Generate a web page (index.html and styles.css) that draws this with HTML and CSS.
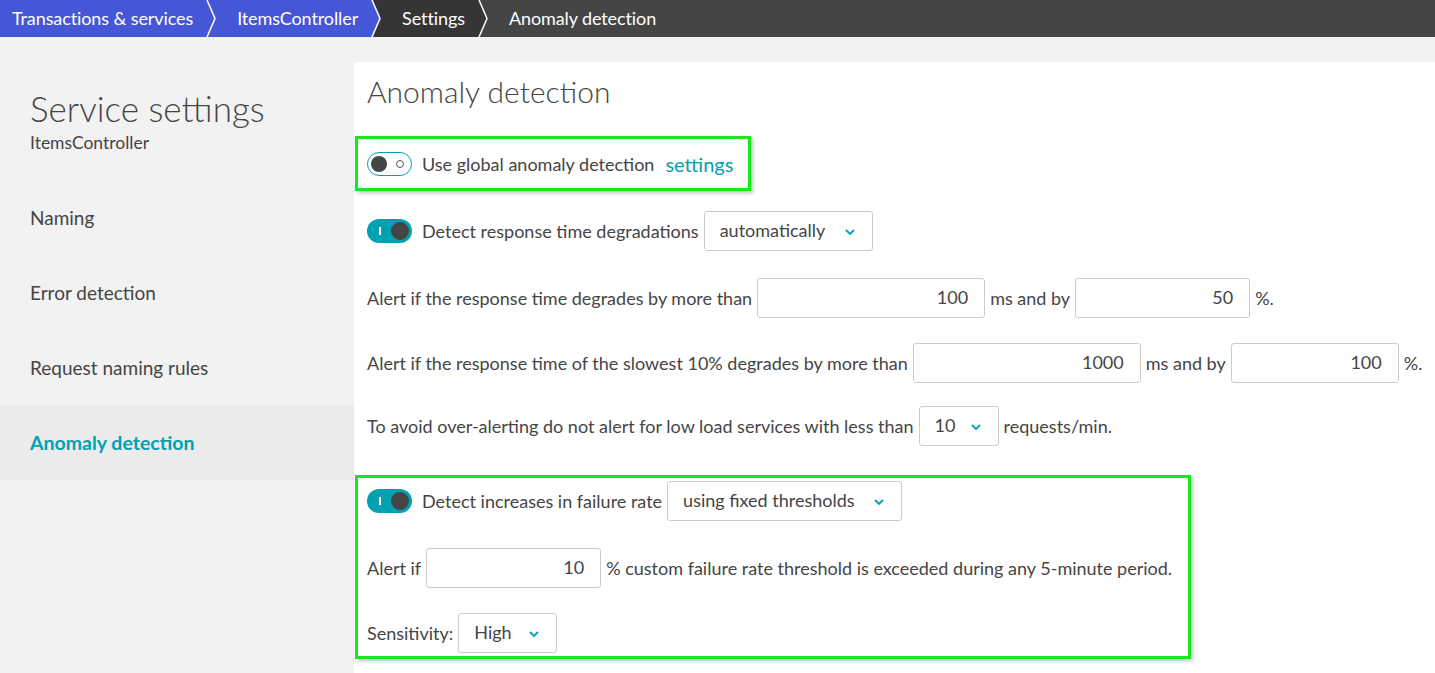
FILE: index.html
```html
<!DOCTYPE html>
<html lang="en">
<head>
<meta charset="utf-8">
<title>Anomaly detection</title>
<link rel="stylesheet" href="styles.css">
</head>
<body>
<header class="crumbs">
  <span class="crumb blue first">Transactions &amp; services</span>
  <svg class="sep" width="14" height="37" viewBox="0 0 14 37"><rect x="0" y="0" width="14" height="37" fill="#4556d6"/><polyline points="2,0 10,18.5 2,37" fill="none" stroke="#fff" stroke-width="1.5"/></svg>
  <span class="crumb blue">ItemsController</span>
  <svg class="sep" width="14" height="37" viewBox="0 0 14 37"><rect x="0" y="0" width="14" height="37" fill="#353535"/><polygon points="0,0 2,0 10,18.5 2,37 0,37" fill="#4556d6"/><polyline points="2,0 10,18.5 2,37" fill="none" stroke="#fff" stroke-width="1.5"/></svg>
  <span class="crumb dark">Settings</span>
  <svg class="sep" width="14" height="37" viewBox="0 0 14 37"><rect x="0" y="0" width="14" height="37" fill="#454545"/><polygon points="0,0 2,0 10,18.5 2,37 0,37" fill="#353535"/><polyline points="2,0 10,18.5 2,37" fill="none" stroke="#fff" stroke-width="1.5"/></svg>
  <span class="crumb grey">Anomaly detection</span>
</header>
<div class="main">
  <aside class="sidebar">
    <h1 class="side-title">Service settings</h1>
    <div class="side-sub">ItemsController</div>
    <nav class="nav">
      <a class="nav-item">Naming</a>
      <a class="nav-item">Error detection</a>
      <a class="nav-item">Request naming rules</a>
      <a class="nav-item active">Anomaly detection</a>
    </nav>
  </aside>
  <section class="panel">
    <h2 class="panel-title">Anomaly detection</h2>

    <div class="hl hl-one">
      <div class="row">
        <span class="toggle off"><span class="knob"></span><span class="ring"></span></span>
        <span class="label">Use global anomaly detection</span>
        <a class="link">settings</a>
      </div>
    </div>

    <div class="row r2">
      <span class="toggle on"><span class="bar"></span><span class="knob"></span></span>
      <span class="label">Detect response time degradations</span>
      <span class="select w-auto">automatically<svg class="chev" width="12" height="8" viewBox="0 0 12 8"><polyline points="2,2 6,6 10,2" fill="none" stroke="#00a1b2" stroke-width="1.8"/></svg></span>
    </div>

    <div class="row r3">
      <span>Alert if the response time degrades by more than</span>
      <span class="input w-a">100</span>
      <span>ms and by</span>
      <span class="input w-b">50</span>
      <span>%.</span>
    </div>

    <div class="row r4">
      <span>Alert if the response time of the slowest 10% degrades by more than</span>
      <span class="input w-a">1000</span>
      <span>ms and by</span>
      <span class="input w-c">100</span>
      <span>%.</span>
    </div>

    <div class="row r5">
      <span>To avoid over-alerting do not alert for low load services with less than</span>
      <span class="select w-10">10<svg class="chev" width="12" height="8" viewBox="0 0 12 8"><polyline points="2,2 6,6 10,2" fill="none" stroke="#00a1b2" stroke-width="1.8"/></svg></span>
      <span>requests/min.</span>
    </div>

    <div class="hl hl-two">
      <div class="row">
        <span class="toggle on"><span class="bar"></span><span class="knob"></span></span>
        <span class="label">Detect increases in failure rate</span>
        <span class="select w-fixed">using fixed thresholds<svg class="chev" width="12" height="8" viewBox="0 0 12 8"><polyline points="2,2 6,6 10,2" fill="none" stroke="#00a1b2" stroke-width="1.8"/></svg></span>
      </div>
      <div class="row r7">
        <span>Alert if</span>
        <span class="input w-d">10</span>
        <span>% custom failure rate threshold is exceeded during any 5-minute period.</span>
      </div>
      <div class="row r8">
        <span>Sensitivity:</span>
        <span class="select w-high">High<svg class="chev" width="12" height="8" viewBox="0 0 12 8"><polyline points="2,2 6,6 10,2" fill="none" stroke="#00a1b2" stroke-width="1.8"/></svg></span>
      </div>
    </div>
  </section>
</div>
</body>
</html>
```
FILE: styles.css
```css
* { box-sizing: border-box; }
html, body { margin: 0; height: 100%; }
body {
  background: #f2f2f2;
  font-family: Lato, "Open Sans", sans-serif;
  color: #454545;
  font-size: 18px;
  overflow: hidden;
}

.crumbs {
  display: flex;
  height: 37px;
  background: #454545;
  align-items: stretch;
}
.crumb {
  display: flex;
  align-items: center;
  color: #fff;
  font-size: 18px;
  letter-spacing: -0.1px;
  padding: 0 12px 2px 18px;
}
.crumb.first { padding-left: 12px; }
.crumb.blue { background: #4556d6; }
.crumb.dark { background: #353535; }
.crumb.grey { background: #454545; }
.sep { display: block; flex: none; }

.main { display: flex; height: calc(100% - 37px); }

.sidebar {
  width: 354px;
  flex: none;
  padding-top: 51px;
}
.side-title {
  margin: 0 0 0 30px;
  font-size: 35px;
  font-weight: 300;
  line-height: 40px;
  color: #454545;
}
.side-sub {
  margin: 5px 0 0 30px;
  line-height: 20px;
  font-size: 17.5px;
}
.nav { margin-top: 27px; display: flex; flex-direction: column; }
.nav-item {
  height: 75px;
  display: flex;
  align-items: center;
  padding-left: 30px;
  font-size: 19px;
  color: #454545;
}
.nav-item.active {
  background: #ebebeb;
  color: #00a1b2;
  font-weight: 700;
  font-size: 19.5px;
}

.panel {
  flex: 1;
  margin-top: 25px;
  background: #fff;
  border-top-left-radius: 4px;
  padding: 12px 0 0 0;
}
.panel-title {
  margin: 0 0 0 13px;
  font-size: 30px;
  font-weight: 300;
  line-height: 34px;
  color: #454545;
}

.row {
  display: flex;
  align-items: center;
  height: 40px;
  gap: 5px;
  white-space: nowrap;
  padding-left: 13px;
}
.hl .row { padding-left: 9px; }
.hl {
  border: 3px solid #17e817;
  box-shadow: 2px 2px 4px rgba(0,0,0,0.25);
  margin-left: 1px;
}
.hl-one {
  width: 396px;
  height: 55px;
  margin-top: 28px;
  padding-top: 5px;
}
.hl-one .link { margin-left: 6px; }
.link { color: #00a1b2; font-size: 20px; }
.label { margin-left: 5px; }

.r2 { margin-top: 20px; }
.r3 { margin-top: 27px; }
.r4 { margin-top: 25px; }
.r5 { margin-top: 23px; }
.hl-two {
  width: 836px;
  margin-top: 29px;
  padding: 3px 0 3px 0;
}
.r7 { margin-top: 27px; }
.r8 { margin-top: 25px; }

.toggle {
  position: relative;
  width: 45px;
  height: 24px;
  border-radius: 12px;
  flex: none;
}
.toggle.off { border: 1px solid #00a1b2; background: #fff; }
.toggle.off .knob {
  position: absolute; left: 3px; top: 3px;
  width: 16px; height: 16px; border-radius: 50%; background: #454545;
}
.toggle.off .ring {
  position: absolute; right: 7px; top: 7px;
  width: 8px; height: 8px; border-radius: 50%; border: 1.5px solid #555;
}
.toggle.on { background: #00a1b2; }
.toggle.on .knob {
  position: absolute; right: 3px; top: 3px;
  width: 18px; height: 18px; border-radius: 50%; background: #454545;
}
.toggle.on .bar {
  position: absolute; left: 12px; top: 8px;
  width: 1.5px; height: 8px; background: #fff;
}

.select {
  display: flex;
  align-items: center;
  justify-content: space-between;
  height: 40px;
  border: 1px solid #ccc;
  border-radius: 3px;
  padding: 0 16px 2px 15px;
  background: #fff;
}
.chev { margin-left: 10px; margin-top: 3px; }
.w-auto { width: 169px; }
.w-10 { width: 80px; }
.w-fixed { width: 235px; }
.w-high { width: 99px; }

.input {
  display: flex;
  align-items: center;
  justify-content: flex-end;
  height: 40px;
  border: 1px solid #ccc;
  border-radius: 3px;
  padding: 0 16px 2px 0;
  background: #fff;
}
.w-a { width: 228px; }
.w-b { width: 175px; }
.w-c { width: 168px; }
.w-d { width: 175px; }
```
